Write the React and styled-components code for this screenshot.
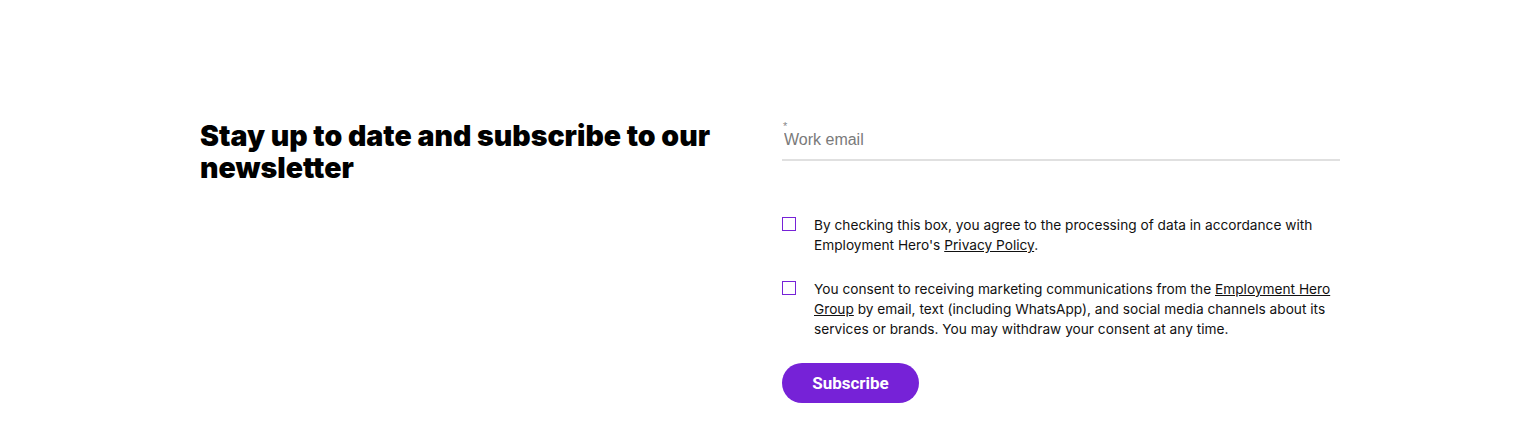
import React from "react";
import styled, { createGlobalStyle } from "styled-components";

const GlobalStyle = createGlobalStyle`
  body {
    margin: 0;
    background: #fff;
    font-family: "Inter", "Liberation Sans", sans-serif;
  }
`;

const Section = styled.section`
  padding: 120px 0 40px 200px;
`;

const Grid = styled.div`
  display: grid;
  grid-template-columns: 582px 558px;
`;

const Heading = styled.h2`
  margin: 0;
  font-family: "Inter", sans-serif;
  font-weight: 900;
  font-size: 28.5px;
  line-height: 32px;
  color: #000;
  letter-spacing: 0;
  width: 540px;
`;

const Form = styled.form`
  display: flex;
  flex-direction: column;
`;

const Field = styled.label`
  position: relative;
  display: block;
  border-bottom: 2px solid #e0e0e0;
  padding: 9px 0 9px 2px;
`;

const Required = styled.span`
  position: absolute;
  left: 1px;
  top: 0;
  font-size: 11px;
  color: #888;
  font-family: "Liberation Sans", sans-serif;
`;

const Input = styled.input`
  border: none;
  outline: none;
  width: 100%;
  padding: 0;
  font-family: "Liberation Sans", Arial, sans-serif;
  font-size: 16px;
  line-height: 20px;
  color: #333;
  &::placeholder {
    color: #7a7a7a;
  }
`;

const Consents = styled.div`
  display: flex;
  flex-direction: column;
  gap: 24px;
  margin-top: 54px;
`;

const Consent = styled.label`
  display: flex;
  gap: 18px;
  align-items: flex-start;
  font-size: 13.7px;
  line-height: 20px;
  color: #111;
`;

const Box = styled.span`
  flex: none;
  width: 14px;
  height: 14px;
  box-sizing: border-box;
  border: 1.5px solid #7622d7;
  margin-top: 2px;
`;

const Link = styled.a`
  color: inherit;
  text-decoration: underline;
`;

const Button = styled.button`
  margin-top: 24px;
  align-self: flex-start;
  width: 137px;
  height: 40px;
  border: none;
  border-radius: 20px;
  background: #7622d7;
  color: #fff;
  font-family: "Roboto", "Liberation Sans", sans-serif;
  font-weight: 700;
  font-size: 17px;
  cursor: pointer;
`;

export default function App() {
  return (
    <>
      <GlobalStyle />
      <Section>
        <Grid>
          <Heading>Stay up to date and subscribe to our newsletter</Heading>
          <Form onSubmit={(e) => e.preventDefault()}>
            <Field>
              <Required>*</Required>
              <Input type="email" placeholder="Work email" />
            </Field>
            <Consents>
              <Consent>
                <Box />
                <span>
                  By checking this box, you agree to the processing of data in accordance with
                  Employment Hero's <Link href="#">Privacy Policy</Link>.
                </span>
              </Consent>
              <Consent>
                <Box />
                <span>
                  You consent to receiving marketing communications from the{" "}
                  <Link href="#">Employment Hero Group</Link> by email, text (including WhatsApp),
                  and social media channels about its services or brands. You may withdraw your
                  consent at any time.
                </span>
              </Consent>
            </Consents>
            <Button type="submit">Subscribe</Button>
          </Form>
        </Grid>
      </Section>
    </>
  );
}
